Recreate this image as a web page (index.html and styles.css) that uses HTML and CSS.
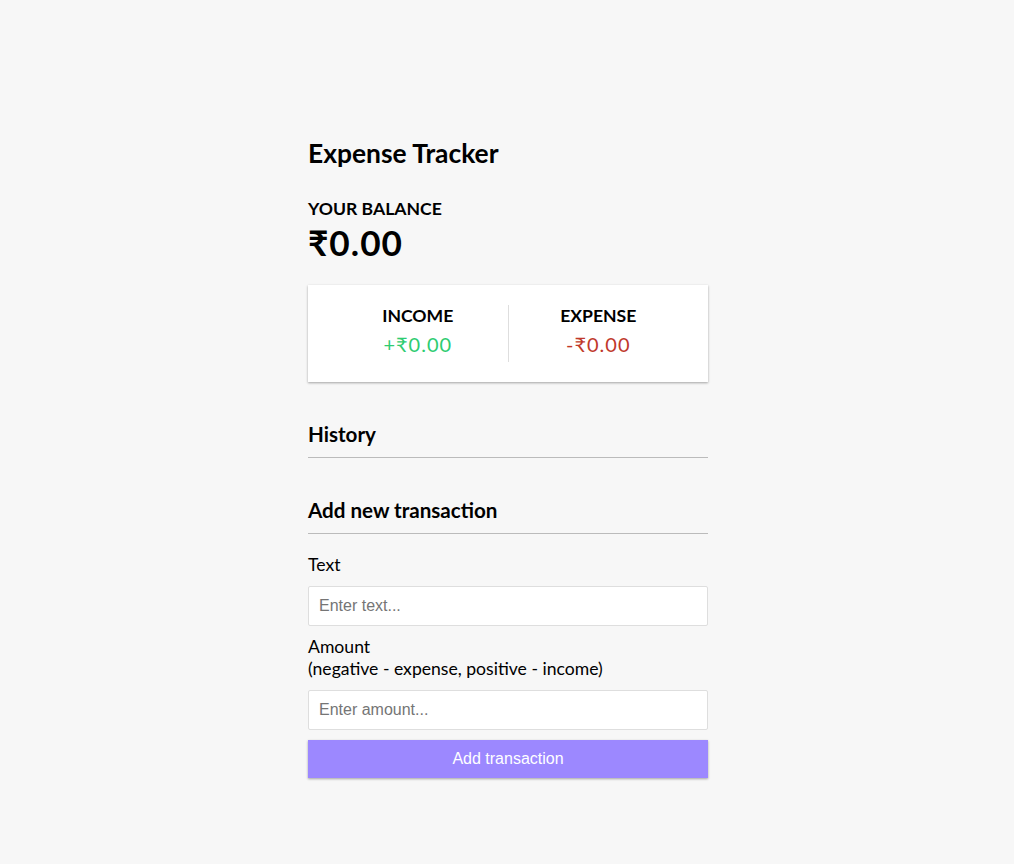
FILE: index.html
```html
<!DOCTYPE html>
<html lang="en">
<head>
<meta charset="UTF-8">
<title>Expense Tracker</title>
<link rel="stylesheet" href="styles.css">
</head>
<body>
<div class="container">
  <h2 class="title">Expense Tracker</h2>
  <h4>Your Balance</h4>
  <h1 class="balance">₹0.00</h1>
  <div class="inc-exp-container">
    <div class="inc-exp-item">
      <h4>Income</h4>
      <p class="money plus">+₹0.00</p>
    </div>
    <div class="inc-exp-item">
      <h4>Expense</h4>
      <p class="money minus">-₹0.00</p>
    </div>
  </div>
  <h3 class="section-title">History</h3>
  <ul class="list"></ul>
  <h3 class="section-title">Add new transaction</h3>
  <form class="form">
    <div class="form-control">
      <label class="label">Text</label>
      <input class="input" type="text" placeholder="Enter text...">
    </div>
    <div class="form-control">
      <label class="label">Amount <br>(negative - expense, positive - income)</label>
      <input class="input" type="number" placeholder="Enter amount...">
    </div>
    <button class="btn" type="button">Add transaction</button>
  </form>
</div>
</body>
</html>
```

FILE: styles.css
```css
* {
  box-sizing: border-box;
}

body {
  background-color: #f7f7f7;
  display: flex;
  flex-direction: column;
  align-items: center;
  justify-content: flex-start;
  min-height: 100vh;
  margin: 0;
  padding-left: 2px;
  font-family: Lato, "Liberation Sans", sans-serif;
  font-size: 17.6px;
}

.container {
  margin: 137px auto 30px;
  width: 400px;
}

.title {
  font-size: 26.4px;
  margin: 0 0 29px;
}

h1 {
  letter-spacing: 1px;
  margin: 0;
}

.balance {
  font-size: 35.2px;
  line-height: 46px;
}

h4 {
  margin: 0;
  text-transform: uppercase;
  font-size: 17.6px;
}

.section-title {
  font-size: 20.6px;
  line-height: 25px;
  border-bottom: 1px solid #bbb;
  padding-bottom: 10px;
  margin: 40px 0 10px;
}

.inc-exp-container {
  background-color: #fff;
  box-shadow: 0 1px 3px rgba(0, 0, 0, 0.12), 0 1px 2px rgba(0, 0, 0, 0.24);
  padding: 20px;
  display: flex;
  justify-content: space-between;
  margin: 20px 0;
}

.inc-exp-item {
  flex: 1;
  text-align: center;
}

.inc-exp-item h4 {
  line-height: 22px;
}

.inc-exp-item:first-of-type {
  border-right: 1px solid #dedede;
}

.money {
  font-size: 20px;
  line-height: 25px;
  letter-spacing: 1px;
  margin: 5px 0;
}

.money.plus {
  color: #2ecc71;
}

.money.minus {
  color: #c0392b;
}

.list {
  list-style-type: none;
  padding: 0;
  margin-bottom: 40px;
}

.label {
  display: inline-block;
  margin: 10px 0;
  line-height: 22px;
}

.input {
  border: 1px solid #dedede;
  border-radius: 2px;
  display: block;
  font-family: "Liberation Sans", Arial, sans-serif;
  font-size: 16px;
  padding: 10px;
  width: 100%;
}

.btn {
  cursor: pointer;
  background-color: #9c88ff;
  box-shadow: 0 1px 3px rgba(0, 0, 0, 0.12), 0 1px 2px rgba(0, 0, 0, 0.24);
  color: #fff;
  border: 0;
  display: block;
  font-family: "Liberation Sans", Arial, sans-serif;
  font-size: 16px;
  margin: 10px 0 30px;
  padding: 10px;
  width: 100%;
}
```
